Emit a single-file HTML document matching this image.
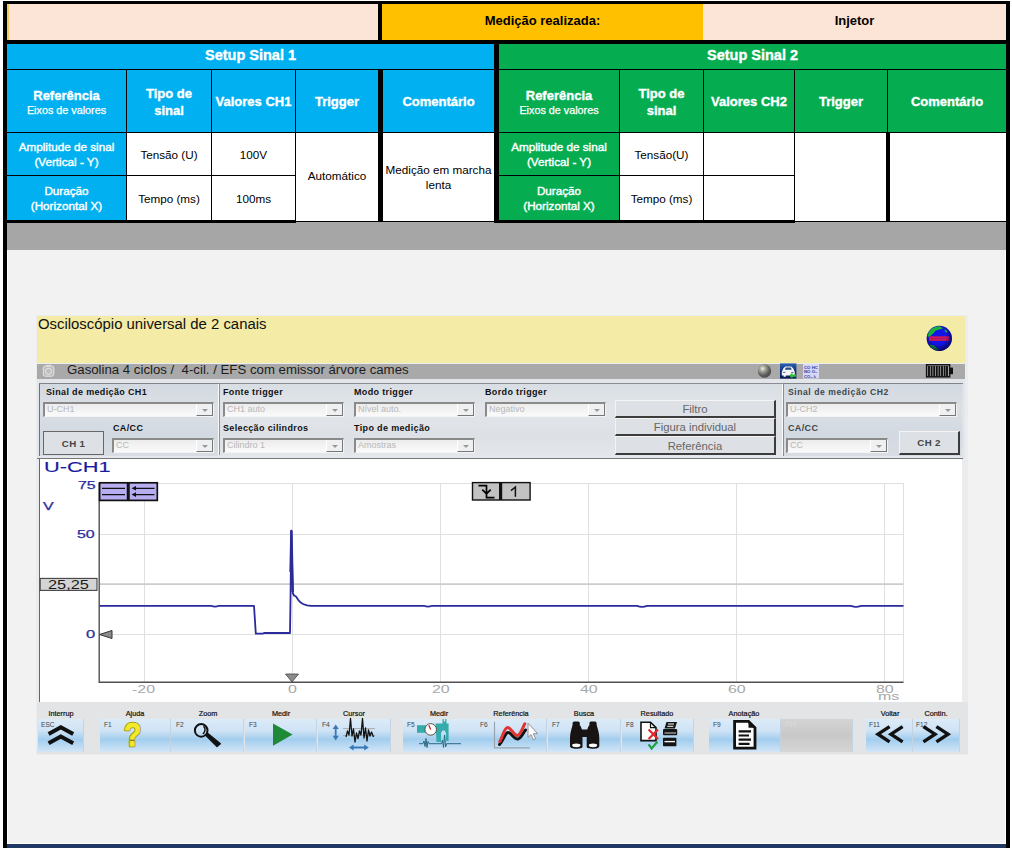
<!DOCTYPE html>
<html>
<head>
<meta charset="utf-8">
<style>
html,body{margin:0;padding:0;}
body{width:1012px;height:849px;position:relative;overflow:hidden;background:#fff;font-family:"Liberation Sans",sans-serif;}
.a{position:absolute;box-sizing:border-box;}
.k{background:#000;}
.bl{background:#00b0f0;}
.gr{background:#06ad50;}
.c{position:absolute;box-sizing:border-box;display:flex;align-items:center;justify-content:center;text-align:center;}
.h{color:#fff;font-weight:bold;font-size:13px;line-height:17px;padding-top:2px;-webkit-text-stroke:0.35px #fff;}
.h small{font-weight:normal;font-size:10.8px;display:block;line-height:13px;-webkit-text-stroke:0.25px #fff;}
.s{color:#fff;font-size:11.7px;line-height:15px;-webkit-text-stroke:0.4px #fff;}
.d{color:#000;font-size:11.7px;line-height:15px;}
</style>
</head>
<body>
<!-- page background -->
<div class="a" style="left:8px;top:250px;width:997px;height:592.7px;background:#f2f2f2;"></div>
<div class="a" style="left:7px;top:221px;width:999px;height:29.4px;background:#a6a6a6;"></div>
<div class="a" style="left:7px;top:844px;width:1000px;height:3.6px;background:#1f3864;"></div>

<!-- TABLE -->
<div id="tbl">
<!-- row 0 -->
<div class="a" style="left:7px;top:4px;width:371px;height:36px;background:#fce4d6;"></div>
<div class="a" style="left:7px;top:4px;width:2px;height:36px;background:#f5c860;"></div>
<div class="c" style="left:382px;top:4px;width:321px;height:36px;background:#ffc000;font-weight:bold;font-size:13px;padding-bottom:3px;">Medição realizada:</div>
<div class="c" style="left:703px;top:4px;width:303px;height:36px;background:#fce4d6;font-weight:bold;font-size:13px;padding-bottom:3px;">Injetor</div>
<!-- row 1 -->
<div class="c bl h" style="left:7px;top:44px;width:487px;height:25px;font-size:14.5px;padding-top:0;padding-bottom:3px;">Setup Sinal 1</div>
<div class="c gr h" style="left:499px;top:44px;width:507px;height:25px;font-size:14.5px;padding-top:0;padding-bottom:3px;">Setup Sinal 2</div>
<!-- row 2 header -->
<div class="c bl h" style="left:7px;top:70px;width:119px;height:62px;"><div>Referência<small>Eixos de valores</small></div></div>
<div class="c bl h" style="left:127px;top:70px;width:84px;height:62px;">Tipo de<br>sinal</div>
<div class="c bl h" style="left:212px;top:70px;width:83px;height:62px;padding-top:1px;">Valores CH1</div>
<div class="c bl h" style="left:296px;top:70px;width:82px;height:62px;padding-top:1px;">Trigger</div>
<div class="c bl h" style="left:383px;top:70px;width:111px;height:62px;padding-top:1px;">Comentário</div>
<div class="c gr h" style="left:499px;top:70px;width:120px;height:62px;"><div>Referência<small>Eixos de valores</small></div></div>
<div class="c gr h" style="left:620px;top:70px;width:83px;height:62px;">Tipo de<br>sinal</div>
<div class="c gr h" style="left:704px;top:70px;width:90px;height:62px;padding-top:1px;">Valores CH2</div>
<div class="c gr h" style="left:795px;top:70px;width:92px;height:62px;padding-top:1px;">Trigger</div>
<div class="c gr h" style="left:888px;top:70px;width:118px;height:62px;padding-top:1px;">Comentário</div>
<!-- row 3 -->
<div class="c bl s" style="left:7px;top:133px;width:119px;height:42px;">Amplitude de sinal<br>(Vertical - Y)</div>
<div class="c d" style="left:127px;top:133px;width:84px;height:42px;background:#fff;">Tensão (U)</div>
<div class="c d" style="left:212px;top:133px;width:83px;height:42px;background:#fff;">100V</div>
<div class="c gr s" style="left:499px;top:133px;width:120px;height:42px;">Amplitude de sinal<br>(Vertical - Y)</div>
<div class="c d" style="left:620px;top:133px;width:83px;height:42px;background:#fff;">Tensão(U)</div>
<div class="c d" style="left:704px;top:133px;width:90px;height:42px;background:#fff;"></div>
<!-- row 4 -->
<div class="c bl s" style="left:7px;top:176px;width:119px;height:44px;">Duração<br>(Horizontal X)</div>
<div class="c d" style="left:127px;top:176px;width:84px;height:44px;background:#fff;">Tempo (ms)</div>
<div class="c d" style="left:212px;top:176px;width:83px;height:44px;background:#fff;">100ms</div>
<div class="c gr s" style="left:499px;top:176px;width:120px;height:44px;">Duração<br>(Horizontal X)</div>
<div class="c d" style="left:620px;top:176px;width:83px;height:44px;background:#fff;">Tempo (ms)</div>
<div class="c d" style="left:704px;top:176px;width:90px;height:44px;background:#fff;"></div>
<!-- merged -->
<div class="c d" style="left:296px;top:133px;width:82px;height:88px;background:#fff;padding-bottom:3px;">Automático</div>
<div class="c d" style="left:383px;top:133px;width:111px;height:88px;background:#fff;">Medição em marcha<br>lenta</div>
<div class="c d" style="left:795px;top:133px;width:91px;height:88px;background:#fff;"></div>
<div class="c d" style="left:890px;top:133px;width:116px;height:88px;background:#fff;"></div>
<!-- lines -->
<div class="a k" style="left:3px;top:1px;width:1007px;height:3px;"></div>
<div class="a k" style="left:3px;top:1px;width:4px;height:846.6px;"></div>
<div class="a k" style="left:1006px;top:1px;width:4px;height:846.6px;"></div>
<div class="a k" style="left:3px;top:40px;width:1007px;height:4px;"></div>
<div class="a k" style="left:378px;top:4px;width:4px;height:40px;"></div>
<div class="a k" style="left:7px;top:69px;width:999px;height:1px;"></div>
<div class="a k" style="left:7px;top:132px;width:999px;height:1px;"></div>
<div class="a k" style="left:7px;top:175px;width:289px;height:1px;"></div>
<div class="a k" style="left:499px;top:175px;width:296px;height:1px;"></div>
<div class="a k" style="left:7px;top:220px;width:289px;height:2.6px;"></div><div class="a k" style="left:296px;top:220.5px;width:198px;height:1.1px;"></div><div class="a k" style="left:494px;top:220px;width:301px;height:2.6px;"></div><div class="a k" style="left:795px;top:220.5px;width:211px;height:1.1px;"></div>
<div class="a k" style="left:126px;top:70px;width:1px;height:151px;"></div>
<div class="a k" style="left:211px;top:70px;width:1px;height:151px;"></div>
<div class="a k" style="left:295px;top:70px;width:1px;height:151px;"></div>
<div class="a k" style="left:378px;top:70px;width:5px;height:152px;"></div>
<div class="a k" style="left:494px;top:44px;width:5px;height:178px;"></div>
<div class="a k" style="left:619px;top:70px;width:1px;height:151px;"></div>
<div class="a k" style="left:703px;top:70px;width:1px;height:151px;"></div>
<div class="a k" style="left:794px;top:70px;width:1px;height:151px;"></div>
<div class="a k" style="left:887px;top:70px;width:1px;height:63px;"></div>
<div class="a k" style="left:886px;top:133px;width:4px;height:89px;"></div>
</div>

<!-- APP -->
<style>
.lb{position:absolute;font-weight:bold;font-size:9px;letter-spacing:0.35px;line-height:10px;color:#111;white-space:nowrap;}
.dd{position:absolute;box-sizing:border-box;height:15px;background:linear-gradient(#ececec,#fafafa);border-top:2px solid #8a8a8a;border-left:2px solid #8a8a8a;border-bottom:1px solid #f4f4f4;border-right:1px solid #f4f4f4;font-size:9px;line-height:10px;color:#b8b8b8;padding-left:2px;white-space:nowrap;}
.dd i{position:absolute;right:0;top:0;width:17px;height:12px;box-sizing:border-box;border-right:1px solid #777;border-bottom:1px solid #777;border-left:1px solid #fff;background:#eef0f2;}
.dd i:after{content:"";position:absolute;left:5px;top:5px;border-left:3px solid transparent;border-right:3px solid transparent;border-top:3px solid #999;}
.bt{position:absolute;box-sizing:border-box;background:#dde1e6;border-top:1px solid #f4f4f4;border-left:1px solid #f4f4f4;border-right:2px solid #3c3c3c;border-bottom:2px solid #3c3c3c;font-size:11.3px;color:#666;text-align:center;white-space:nowrap;}
.ax{position:absolute;font-size:11.4px;line-height:11px;white-space:nowrap;transform-origin:0 0;transform:scaleX(1.4);}
.ay{color:#2c2c9a;-webkit-text-stroke:0.25px #2c2c9a;}
.tb{position:absolute;top:718.5px;height:33.3px;box-sizing:border-box;background:linear-gradient(#dcebf8 0%,#cfe3f5 35%,#a3cdee 62%,#b9d9f2 80%,#d4e6f6 100%);border-right:1px solid #c3d3e0;}
.tl{position:absolute;top:710px;font-size:7.3px;line-height:8px;color:#111;-webkit-text-stroke:0.2px #111;white-space:nowrap;transform:translateX(-50%);}
.fk{position:absolute;top:721.3px;font-size:6.6px;line-height:7px;color:#444;white-space:nowrap;}
</style>
<div id="app">
<div class="a" style="left:36px;top:315px;width:932px;height:440px;background:#eaeced;"></div>
<div class="a" style="left:37px;top:316px;width:928px;height:46.5px;background:#f3eba6;"></div>
<div class="a" style="left:38px;top:316px;font-size:14.9px;line-height:17px;color:#111;white-space:nowrap;">Osciloscópio universal de 2 canais</div>
<div class="a" style="left:37px;top:363.6px;width:928px;height:15.2px;background:#a9a9a9;"></div>
<div class="a" style="left:67px;top:363.4px;font-size:12.3px;line-height:15px;color:#1c1c1c;white-space:pre;transform-origin:0 0;transform:scaleX(1.075);">Gasolina 4 ciclos /  4-cil. / EFS com emissor árvore cames</div>
<!-- control panel -->
<div class="a" style="left:37px;top:379px;width:928px;height:80px;background:#e2e5e9;"></div>
<div class="a" style="left:39px;top:383px;width:924px;height:75px;background:linear-gradient(#d9dee4,#e2e6ea 35%,#dde1e6 70%,#e4e7eb);border-top:1.5px solid #8a8e93;"></div>
<div class="a" style="left:39px;top:383px;width:179px;height:73px;background:linear-gradient(#d3d9e0,#dbe0e6 35%,#d3d9e1 70%,#d8dde3);border-top:1.5px solid #80848a;border-left:1.5px solid #70747a;"></div>
<div class="a" style="left:217.5px;top:384px;width:1.2px;height:71px;background:#fafafa;"></div>
<div class="a" style="left:218.8px;top:384px;width:1px;height:71px;background:#8d9196;"></div>
<div class="a" style="left:783px;top:383px;width:179px;height:73px;background:linear-gradient(#d3d9e0,#dbe0e6 35%,#d3d9e1 70%,#d8dde3);border-top:1.5px solid #80848a;border-left:1.5px solid #8a8e94;"></div>
<div class="a" style="left:781.5px;top:384px;width:1.2px;height:71px;background:#fafafa;"></div>
<div class="a" style="left:37px;top:458px;width:926px;height:1px;background:#777;"></div>

<div class="lb" style="left:46px;top:387px;">Sinal de medição CH1</div>
<div class="dd" style="left:43px;top:402px;width:171px;">U-CH1<i></i></div>
<div class="lb" style="left:113px;top:423px;">CA/CC</div>
<div class="bt" style="left:43px;top:431px;width:61px;height:24px;border:1px solid #666;font-weight:bold;font-size:9.7px;letter-spacing:0.3px;line-height:23px;color:#444;">CH 1</div>
<div class="dd" style="left:112px;top:438px;width:102px;">CC<i></i></div>

<div class="lb" style="left:223px;top:387px;">Fonte trigger</div>
<div class="dd" style="left:223px;top:402px;width:121px;">CH1 auto<i></i></div>
<div class="lb" style="left:223px;top:423px;">Selecção cilindros</div>
<div class="dd" style="left:223px;top:438px;width:121px;">Cilindro 1<i></i></div>

<div class="lb" style="left:354px;top:387px;">Modo trigger</div>
<div class="dd" style="left:354px;top:402px;width:121px;">Nível auto.<i></i></div>
<div class="lb" style="left:354px;top:423px;">Tipo de medição</div>
<div class="dd" style="left:354px;top:438px;width:121px;">Amostras<i></i></div>

<div class="lb" style="left:485px;top:387px;">Bordo trigger</div>
<div class="dd" style="left:485px;top:402px;width:121px;">Negativo<i></i></div>

<div class="bt" style="left:615px;top:400px;width:161px;height:18px;line-height:17px;">Filtro</div>
<div class="bt" style="left:615px;top:418px;width:161px;height:18px;line-height:17px;">Figura individual</div>
<div class="bt" style="left:615px;top:436px;width:161px;height:19px;line-height:18px;">Referência</div>

<div class="lb" style="left:788px;top:387px;color:#40464c;font-size:8.6px;letter-spacing:0.55px;">Sinal de medição CH2</div>
<div class="dd" style="left:786px;top:402px;width:171px;">U-CH2<i></i></div>
<div class="lb" style="left:788px;top:423px;color:#40464c;">CA/CC</div>
<div class="dd" style="left:786px;top:438px;width:102px;">CC<i></i></div>
<div class="bt" style="left:899px;top:431px;width:61px;height:24px;font-weight:bold;font-size:9.7px;letter-spacing:0.3px;line-height:22px;color:#444;">CH 2</div>

<!-- chart -->
<div class="a" style="left:39px;top:459px;width:923px;height:242.5px;background:#fff;border-left:1px solid #666;"></div>
<svg class="a" style="left:0;top:0;" width="1012" height="849" viewBox="0 0 1012 849">
<g stroke="#e0e0e0" stroke-width="1" fill="none">
<path d="M99.5 483.5H903.5M99.5 534.5H903.5M99.5 634.5H903.5"/>
<path d="M144.5 483V682M292.5 483V682M440.5 483V682M588.5 483V682M736.5 483V682M884.5 483V682M903.5 483V682"/>
</g>
<path d="M99.5 584.2H903.5" stroke="#cdcdcd" stroke-width="1.7"/>
<path d="M99.2 483V682.2H903.5" stroke="#505050" stroke-width="1.4" fill="none"/>
<path id="sig" d="M99.5 605.8H211Q215 607.6 219 605.8H254L255.8 633.6H263L264 633H290L290.5 600L291.3 530.8L292 560L292.4 577L292.8 593L294 595.5L296 596.5L298 599.6L300 602L303 604L307 605.3L311 605.8H424Q428 607.6 432 605.8H637Q642 607.8 647 605.8H851Q856 607.8 861 605.8H903.5" stroke="#2a2a9c" stroke-width="1.8" fill="none" stroke-linejoin="round"/>
<path d="M290.6 572L291.4 531L292.7 592" stroke="#2a2a9c" stroke-width="2.4" fill="none" stroke-linejoin="round"/>
<path d="M99.5 634.5L112 630.5V638.5Z" fill="#8c8c8c" stroke="#333" stroke-width="1"/>
<path d="M285.5 674L298.5 674L292 682Z" fill="#8c8c8c" stroke="#444" stroke-width="0.8"/>
<!-- purple buttons -->
<rect x="99.6" y="482.8" width="28" height="17.6" fill="#b6aef0" stroke="#111" stroke-width="1.7"/>
<rect x="128.9" y="482.8" width="28.4" height="17.6" fill="#b6aef0" stroke="#111" stroke-width="1.7"/>
<path d="M102 488.3H125M102 494.6H125" stroke="#111" stroke-width="1.2"/>
<path d="M134 488.3H154.5M134 494.6H154.5" stroke="#111" stroke-width="1.2"/>
<path d="M131.5 488.3L136 486V490.6ZM131.5 494.6L136 492.3V496.9Z" fill="#111"/>
<!-- trigger boxes -->
<rect x="472.5" y="482.6" width="57.6" height="17.4" fill="#c2c2c2" stroke="#111" stroke-width="1.4"/>
<rect x="499" y="482.6" width="3.2" height="17.4" fill="#111"/>
<path d="M478.5 485.6H486.5V497.6H494.5M482.3 489.6L486.5 493.8L490.7 489.6" stroke="#000" stroke-width="1.7" fill="none"/>
<path d="M511 490.6L515.4 487V496.8" stroke="#111" stroke-width="1.5" fill="none"/>
<!-- 25,25 box -->
<rect x="40.2" y="578.4" width="56.8" height="12" fill="#d4d4d4" stroke="#444" stroke-width="1.1"/>
</svg>
<div class="a" style="left:44px;top:459.5px;font-size:13.8px;line-height:16px;color:#1a1aa0;-webkit-text-stroke:0.12px #1a1aa0;white-space:nowrap;transform-origin:0 0;transform:scaleX(1.58);">U-CH1</div>
<div class="ax ay" style="left:77.6px;top:480px;">75</div>
<div class="ax ay" style="left:43px;top:501px;">V</div>
<div class="ax ay" style="left:77.4px;top:529px;">50</div>
<div class="ax ay" style="left:86.4px;top:629px;font-size:11.8px;">0</div>
<div class="ax" style="left:47.6px;top:579.8px;color:#1a1a1a;font-size:12px;transform:scaleX(1.36);">25,25</div>

<div class="ax" style="left:132px;top:684px;color:#a8a8a8;">-20</div>
<div class="ax" style="left:288px;top:684px;color:#a8a8a8;">0</div>
<div class="ax" style="left:432px;top:684px;color:#a8a8a8;">20</div>
<div class="ax" style="left:580px;top:684px;color:#a8a8a8;">40</div>
<div class="ax" style="left:728px;top:684px;color:#a8a8a8;">60</div>
<div class="ax" style="left:876px;top:684px;color:#a8a8a8;">80</div>
<div class="ax" style="left:878px;top:691px;color:#a8a8a8;">ms</div>

<!-- toolbar -->
<div class="a" style="left:37px;top:702px;width:931px;height:52px;background:#e2e4e6;"></div>
<div class="tb" style="left:38px;width:46px;"></div>
<div class="tb" style="left:100px;width:71px;"></div>
<div class="tb" style="left:171px;width:73px;"></div>
<div class="tb" style="left:245px;width:72px;"></div>
<div class="tb" style="left:318px;width:73px;"></div>
<div class="tb" style="left:403px;width:73px;border-right:none;"></div>
<div class="tb" style="left:476px;width:71px;"></div>
<div class="tb" style="left:548px;width:73px;"></div>
<div class="tb" style="left:622px;width:72px;"></div>
<div class="tb" style="left:709px;width:72px;"></div>
<div class="tb" style="left:781px;width:72px;background:linear-gradient(#d4d4d4,#c8c8c8 50%,#d6d6d6);"></div>
<div class="tb" style="left:866px;width:47px;"></div>
<div class="tb" style="left:913px;width:47px;"></div>
<div class="tl" style="left:61px;">Interrup</div>
<div class="tl" style="left:135px;">Ajuda</div>
<div class="tl" style="left:208px;">Zoom</div>
<div class="tl" style="left:281px;">Medir</div>
<div class="tl" style="left:354px;">Cursor</div>
<div class="tl" style="left:439px;">Medir</div>
<div class="tl" style="left:511px;">Referência</div>
<div class="tl" style="left:584px;">Busca</div>
<div class="tl" style="left:657px;">Resultado</div>
<div class="tl" style="left:744px;">Anotação</div>
<div class="tl" style="left:890px;">Voltar</div>
<div class="tl" style="left:936px;">Contin.</div>
<div class="fk" style="left:41px;">ESC</div>
<div class="fk" style="left:104px;">F1</div>
<div class="fk" style="left:176px;">F2</div>
<div class="fk" style="left:249px;">F3</div>
<div class="fk" style="left:322px;">F4</div>
<div class="fk" style="left:407px;">F5</div>
<div class="fk" style="left:480px;">F6</div>
<div class="fk" style="left:552px;">F7</div>
<div class="fk" style="left:626px;">F8</div>
<div class="fk" style="left:713px;">F9</div>
<div class="fk" style="left:785px;color:#ddd;">F10</div>
<div class="fk" style="left:869px;">F11</div>
<div class="fk" style="left:916px;">F12</div>
<svg id="icons" class="a" style="left:0;top:0;" width="1012" height="849" viewBox="0 0 1012 849">
<defs>
<radialGradient id="sph" cx="0.36" cy="0.32" r="0.72"><stop offset="0" stop-color="#f2f2e2"/><stop offset="0.28" stop-color="#a8a8a0"/><stop offset="0.7" stop-color="#5c5c5c"/><stop offset="1" stop-color="#4a4a4a"/></radialGradient><linearGradient id="carbg" x1="0" y1="0" x2="0" y2="1"><stop offset="0" stop-color="#2c62b0"/><stop offset="0.5" stop-color="#103078"/><stop offset="1" stop-color="#0a1c54"/></linearGradient>
<radialGradient id="gl" cx="0.45" cy="0.4" r="0.6"><stop offset="0.55" stop-color="#000040" stop-opacity="0"/><stop offset="1" stop-color="#000030" stop-opacity="0.75"/></radialGradient><clipPath id="gc"><circle cx="939.3" cy="338.4" r="12.3"/></clipPath>
</defs>
<!-- globe -->
<circle cx="939.3" cy="338.4" r="12.6" fill="#1414e6"/>
<g clip-path="url(#gc)">
<path d="M927 336C928 330 933 326.5 940 326L943 328.5L936 330.5L932 334.5L929 337Z" fill="#16b43a"/>
<path d="M929.5 344.5L934 345.5L939 350L934 352L930 348Z" fill="#16b43a"/>
<path d="M944 329L948 331L946 333Z" fill="#16b43a"/>
<rect x="929" y="336.3" width="20.5" height="4.6" fill="#e01848" opacity="0.9"/>
<path d="M931 338.6H948" stroke="#8a1880" stroke-width="1.4" stroke-dasharray="2.4 1.2" opacity="0.7"/>
</g>
<circle cx="939.3" cy="338.4" r="12.6" fill="url(#gl)"/>
<!-- sphere -->
<circle cx="764.5" cy="371" r="6.7" fill="url(#sph)"/>
<!-- car icon -->
<rect x="780" y="363.4" width="16.4" height="15.2" fill="url(#carbg)"/>
<path d="M781.8 372L783.3 368.4L785.3 366.4H791.3L793.3 368.4L794.8 372V375.4H793V376.8H790.8V375.4H785.8V376.8H783.6V375.4H781.8Z" fill="#f6f6f6"/>
<path d="M784.8 369.8L785.8 367.6H790.8L791.8 369.8Z" fill="#274a8c"/>
<path d="M783 372.4H785.4M791.2 372.4H793.6" stroke="#5a6a90" stroke-width="1"/>
<path d="M789.2 375.6L792.4 372.8V374.4H796V376.8H792.4V378.4Z" fill="#2cc030"/>
<!-- CO text icon -->
<rect x="803" y="364" width="16" height="14.5" fill="#d8d8f2"/>
<g font-family="Liberation Sans" font-size="4.3" font-weight="bold" fill="#3434a0">
<text x="804" y="368.5">CO HC</text><text x="804" y="373.2">NO O₂</text><text x="804" y="377.9">CO₂ λ</text>
</g>
<!-- battery -->
<rect x="926.6" y="364.8" width="23" height="12" fill="#bdbdbd" stroke="#111" stroke-width="1.5"/>
<rect x="950" y="367.6" width="3" height="6.6" fill="#111"/>
<path d="M929 366V376M931.6 366V376M934.2 366V376M936.8 366V376M939.4 366V376M942 366V376M944.6 366V376M947 366V376" stroke="#111" stroke-width="1.9"/>
<!-- camera -->
<rect x="43.3" y="366" width="10.5" height="10.2" rx="2" fill="#bcbcbc" stroke="#e6e6e6" stroke-width="1"/>
<circle cx="48.5" cy="371.3" r="3" fill="none" stroke="#eee" stroke-width="1"/>
<rect x="46" y="364.8" width="5" height="1.6" fill="#ddd"/>
<!-- ESC chevrons -->
<g fill="none" stroke="#111" stroke-width="4" stroke-linejoin="miter">
<path d="M48.6 734L60.8 727.3L73.2 734"/>
<path d="M48.6 743.2L60.8 736.5L73.2 743.2"/>
</g>
<!-- question mark -->
<g transform="translate(124 746.3) scale(0.86 1)" font-family="Liberation Sans" font-weight="bold" font-size="33">
<text x="0" y="0" fill="#8a8a10" stroke="#8a8a10" stroke-width="2.6" stroke-linejoin="round">?</text>
<text x="0" y="0" fill="#f4e82a" stroke="#f4e82a" stroke-width="0.9">?</text>
</g>
<!-- magnifier -->
<circle cx="201.2" cy="730.4" r="6.3" fill="none" stroke="#111" stroke-width="2"/>
<path d="M203.6 726.2C205.6 728.4 205.4 731.6 203 734" stroke="#111" stroke-width="1.6" fill="none"/>
<path d="M205.4 735L207.6 733.2L220.4 743.8L217 746.6Z" fill="#111" stroke="#111" stroke-width="1.2" stroke-linejoin="round"/>
<!-- play -->
<path d="M273 723.5V745.8L292.6 734.6Z" fill="#1e8a38"/>
<!-- cursor icon -->
<path d="M343 728.6H375M343 735.6H375" stroke="#9a9a9a" stroke-width="0.8"/>
<path d="M346 737L347.5 731L349 735L350.5 718.5L352 736L353.5 729L355 742L356.5 733L358 738.5L359.5 731L361 735L362.5 718.5L364 738L365.5 728L367 741L368.5 730L370 736L371.5 732L373.5 737" fill="none" stroke="#111" stroke-width="1.3" stroke-linejoin="round"/>
<g fill="#3878b8" stroke="none">
<path d="M335.7 724.4L338.8 729H336.6V735.8H338.8L335.7 740.4L332.6 735.8H334.8V729H332.6Z"/>
<path d="M349 747.4L353.6 744.4V746.4H364.2V744.4L368.8 747.4L364.2 750.4V748.4H353.6V750.4Z"/>
</g>
<!-- measure icon F5 -->
<g>
<rect x="417" y="725.2" width="10" height="7.6" fill="#34acac"/>
<path d="M435.5 723.6H442.5V719H443.8V721.5H445.2V719H446.5V723.6H448.6V741H446V733L444.5 730.5H442.5L441 733V742H436.5Z" fill="#34acac"/>
<circle cx="430.7" cy="729.4" r="5.8" fill="#fbfbfb" stroke="#5a5040" stroke-width="1"/>
<path d="M430.7 729.6L428.8 725.2" stroke="#c02020" stroke-width="1.2"/>
<path d="M419 743.7H423L424 741L425 746.5L426 738.5L427 747.5L428 741.5L429 743.7H440L441.5 743.7L442.5 740L443.5 747.5L444.6 735L445.6 747L446.6 743.7H461" fill="none" stroke="#2a6a88" stroke-width="1"/>
</g>
<!-- reference icon F6 -->
<path d="M494.5 721.8V747.8H530" fill="none" stroke="#9aa4ae" stroke-width="1.2"/>
<path d="M499.5 744.5C503 741 505 733 508 732.5C511 732 514 739.5 518 739C521 738.5 523 733 525.5 730" fill="none" stroke="#111" stroke-width="3" stroke-linecap="round"/>
<path d="M499.8 741.5C503 736 504.5 727.5 507.5 727.5C511 727.5 514 736 517.5 735.5C520.5 735 522.5 728 524.8 723.8" fill="none" stroke="#e03434" stroke-width="3" stroke-linecap="round"/>
<path d="M528 723.2V737.4L531 734.6L533.4 739.8L535.6 738.8L533.3 733.8L537.6 733.6Z" fill="#fdfdfd" stroke="#888" stroke-width="0.9" stroke-linejoin="round"/>
<!-- binoculars -->
<g fill="#181414">
<rect x="572.6" y="721.4" width="7.2" height="5" rx="1.6"/>
<rect x="589.4" y="721.4" width="7.2" height="5" rx="1.6"/>
<path d="M572.6 725C572.6 725 580 724 580.8 726.5L582.5 731V747C582.5 749 570 750 570 746V738C570 733 571.5 729 572.6 725Z"/>
<path d="M596.6 725C596.6 725 589.2 724 588.4 726.5L586.7 731V747C586.7 749 599.3 750 599.3 746V738C599.3 733 597.8 729 596.6 725Z"/>
<rect x="581" y="729.5" width="7.5" height="7.5"/>
</g>
<ellipse cx="576.3" cy="745.3" rx="4.2" ry="1.9" fill="#fbfbfb"/>
<ellipse cx="593" cy="745.3" rx="4.2" ry="1.9" fill="#fbfbfb"/>
<!-- result icon F8 -->
<path d="M641 722.2H650.5L656 727.6V740.6H641Z" fill="#fdfdfd" stroke="#111" stroke-width="1.6" stroke-linejoin="miter"/>
<path d="M650.5 722.2V727.6H656" fill="none" stroke="#111" stroke-width="1.2"/>
<path d="M648.6 729.4L658 739M658 729.4L648.6 739" stroke="#e02828" stroke-width="2.2"/>
<path d="M648.6 744.4L651.6 748.4L657.4 741.8" fill="none" stroke="#20a040" stroke-width="2.2"/>
<g fill="#151515">
<path d="M666.5 722H677L675 728.5H664.5Z"/>
<rect x="663" y="729" width="14.2" height="6.2" rx="1"/>
<rect x="663" y="737.8" width="13.4" height="8.4" rx="0.8"/>
</g>
<path d="M668 724H674M667.3 726.3H673.3" stroke="#fff" stroke-width="1"/>
<path d="M664.5 733H676" stroke="#e8e8e8" stroke-width="0.9"/>
<path d="M664.5 741.6H675" stroke="#f4f4f4" stroke-width="1.4"/>
<!-- annotation icon F9 -->
<path d="M734.6 721.4H748.5L755 727.8V748.2H734.6Z" fill="#fcfcfc" stroke="#111" stroke-width="2.8" stroke-linejoin="miter"/>
<path d="M748.5 721.4L755 727.8H748.5Z" fill="#111"/>
<path d="M738.6 731.3H751M738.6 735.5H749M738.6 739.7H751M738.6 743.9H749.6" stroke="#111" stroke-width="2.2"/>
<!-- << >> -->
<g fill="none" stroke="#111" stroke-width="3.4" stroke-linejoin="miter">
<path d="M889.6 726.6L878 734.2L889.6 741.8"/>
<path d="M902.6 726.6L891 734.2L902.6 741.8"/>
<path d="M923.4 726.6L935 734.2L923.4 741.8"/>
<path d="M936.4 726.6L948 734.2L936.4 741.8"/>
</g>
</svg>
</div>

</body>
</html>
